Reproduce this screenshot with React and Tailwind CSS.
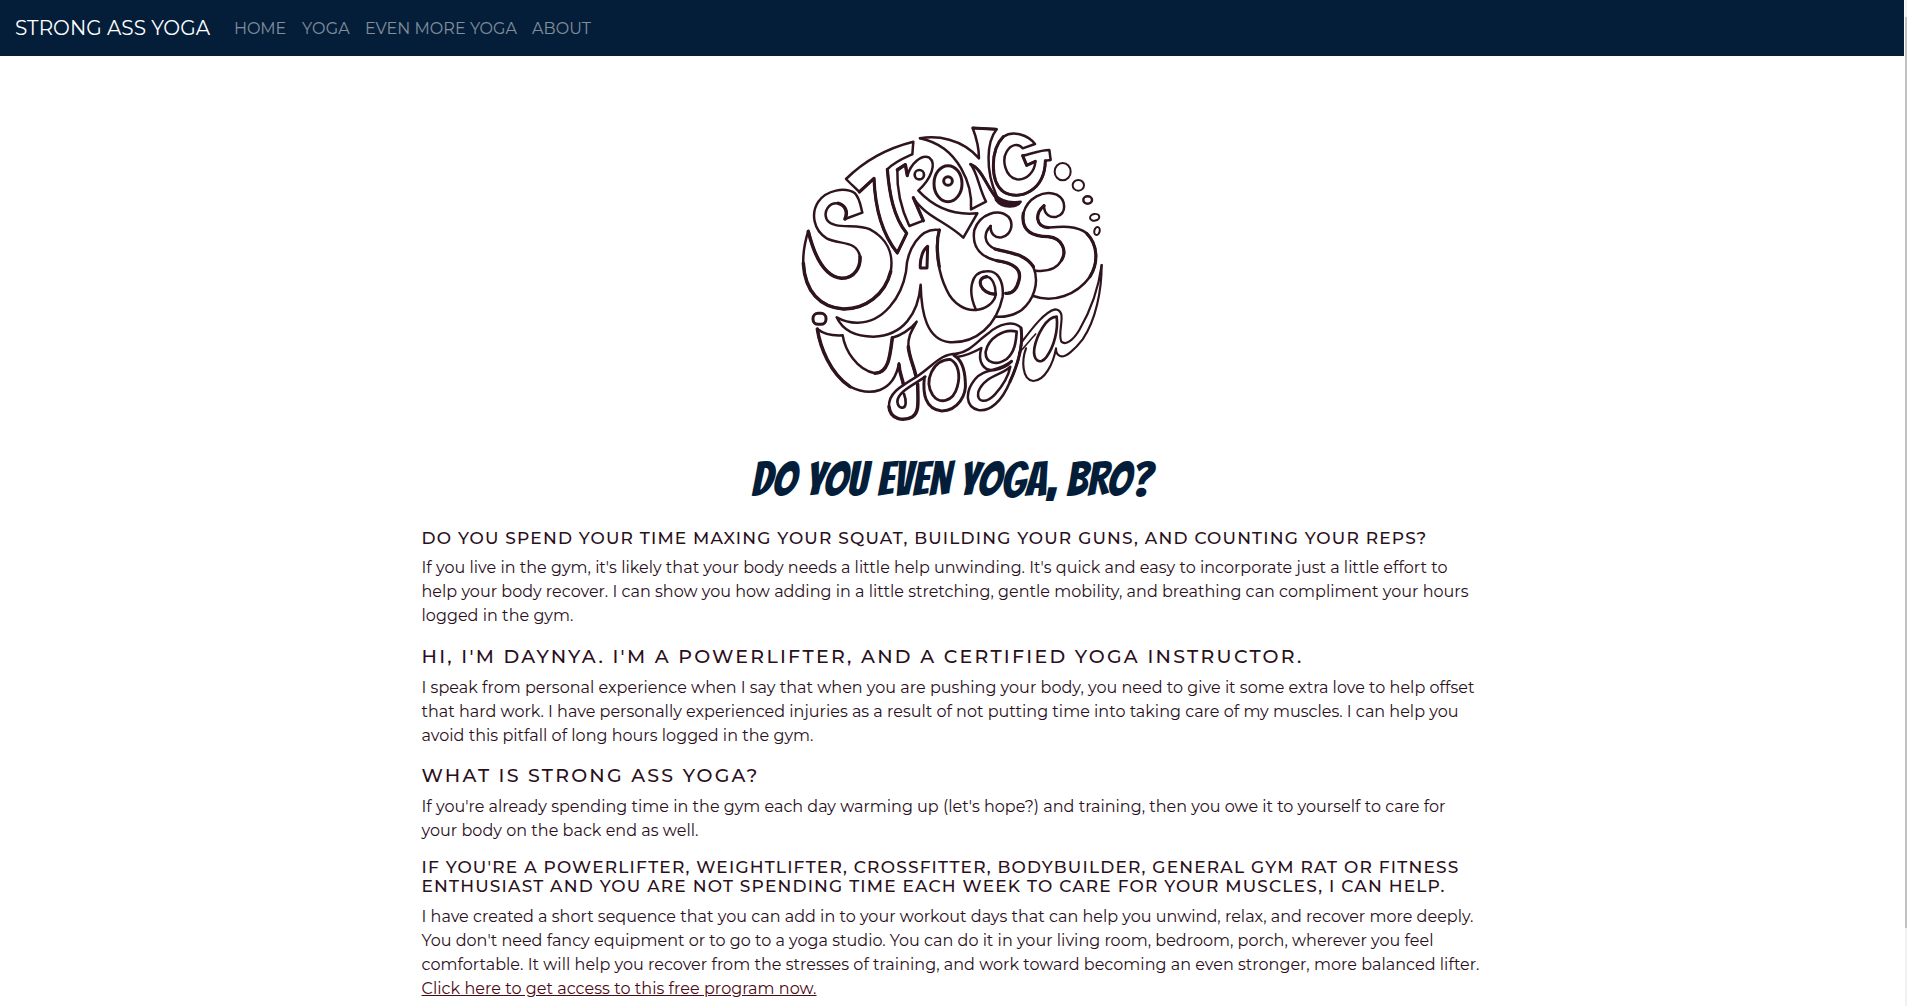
import React, { useLayoutEffect, useRef, useState } from "react";

/* One line of type, tracked so that it is exactly `width` pixels wide. */
function Line({ width, children }) {
  const ref = useRef(null);
  const [spacing, setSpacing] = useState(0);
  useLayoutEffect(() => {
    const natural = ref.current.getBoundingClientRect().width;
    setSpacing((width - natural) / children.length);
  }, []);
  return (
    <span className="block whitespace-pre">
      <span ref={ref} style={{ letterSpacing: spacing + "px" }}>{children}</span>
    </span>
  );
}

function Logo() {
  return (
    <svg
      width="324"
      height="320"
      viewBox="0 0 972 960"
      className="block"
      fill="none"
      stroke="#2f1420"
      strokeWidth="7.5"
      strokeLinecap="round"
      strokeLinejoin="round"
    >
      {/* STRO */}
      <path d="M217 308L165 327C175 305 165 285 145 280C115 277 100 305 110 328C130 362 200 338 240 358C290 385 312 430 302 485C285 555 225 598 160 597C90 592 45 545 40 460C38 420 48 385 55 362C70 425 100 500 155 505C195 505 212 470 210 440C200 390 150 405 110 385C70 360 62 310 85 275C110 240 165 230 195 250C210 265 212 290 217 308Z" />
      <path d="M55 365C70 425 100 500 155 505C195 505 212 470 210 440M165 327C175 305 165 285 145 280M302 485C285 555 225 598 160 597C90 592 45 545 40 460" strokeWidth="10.5" />
      <path d="M168 207C220 155 290 115 370 95L367 133C340 145 315 155 292 178C298 250 310 320 350 370L322 430C275 370 255 290 252 205L208 246C198 235 180 220 168 207Z" />
      <path d="M292 178C298 250 310 320 350 370L322 428C275 370 255 290 252 205L208 246" strokeWidth="9.5" />
      <path d="M322 178L346 163L352 198C362 160 395 132 418 143C440 160 425 205 385 242C425 285 480 318 562 310L520 383C470 335 405 320 370 263L400 332L358 348C335 300 320 240 322 178Z" />
      <path d="M322 180L346 164L352 196M370 263L400 332" strokeWidth="10" />
      <circle cx="388" cy="194" r="14" strokeWidth="8" />
      <ellipse cx="474" cy="221" rx="42" ry="54" strokeWidth="9" />
      <circle cx="474" cy="213" r="13" strokeWidth="9" />

      {/* NG, trailing bubbles */}
      <g transform="translate(450 0)">
        <path d="M-60 85C-10 76 65 85 117 145C117 110 108 80 98 54L170 58C140 95 135 180 170 258" />
        <path d="M92 163C125 175 140 230 170 265M92 163C115 195 115 230 138 275L93 298C98 230 60 110 -60 85" />
        <path d="M99 54L168 58M92 163C125 175 140 230 170 265" strokeWidth="9" />
        <path d="M165 255C185 275 212 280 242 275C235 290 190 300 168 270Z" fill="#2f1420" />
        <path d="M285 102C265 75 220 60 190 80C150 120 150 215 190 245C240 275 315 240 316 152L332 150L328 120C300 120 270 133 248 137L260 166L286 154C285 185 260 212 230 208C195 200 185 150 200 125C212 103 235 98 248 115Z" />
        <path d="M190 80C150 120 150 215 190 245C240 275 315 240 316 152M248 137L260 166L286 154" strokeWidth="9" />
        <ellipse cx="368" cy="185" rx="24" ry="26" strokeWidth="6" />
        <ellipse cx="415" cy="226" rx="17" ry="16" strokeWidth="6" />
        <ellipse cx="443" cy="270" rx="13" ry="11" />
        <ellipse cx="464" cy="322" rx="14" ry="10" transform="rotate(-12 464 322)" strokeWidth="6" />
        <ellipse cx="471" cy="363" rx="8" ry="12" transform="rotate(15 471 363)" strokeWidth="6" />
      </g>

      {/* ASS */}
      <path d="M448 360C390 350 350 420 348 485C335 560 280 640 200 638C175 638 155 630 140 622C160 665 200 680 250 680C340 678 385 610 392 524C394 610 410 690 480 697C560 700 620 645 638 560C642 510 620 480 590 484C540 485 533 545 558 600" />
      <path d="M448 360C430 420 450 500 470 540C490 585 530 602 555 600C590 598 615 575 617 553C618 525 605 500 590 500C555 503 570 552 617 553" />
      <path d="M590 500C555 503 570 552 617 553M448 360C438 395 441 430 448 470" strokeWidth="9.5" />
      <path d="M413 409L411 474L391 474C389 447 398 420 413 409Z" strokeWidth="9" />
      <g transform="translate(450 0)">
        <path d="M152 348C150 370 165 385 185 382C215 375 222 340 205 320C175 295 120 310 103 360C95 410 120 440 170 452C225 460 245 480 237 510C230 540 215 552 196 550" />
        <path d="M152 348C130 370 130 400 165 417C210 430 255 430 280 470C300 520 280 570 245 600C220 617 190 622 165 620" />
        <path d="M170 452C225 460 245 480 237 510C230 540 215 552 198 550M165 417C210 430 255 430 280 470" strokeWidth="10" />
        <path d="M312 287C312 312 330 325 350 320C380 310 380 270 350 254C310 238 262 265 250 310C242 365 280 380 325 380C370 385 380 425 365 450C350 478 320 485 288 482" />
        <path d="M312 287C285 310 285 350 325 353C360 350 410 345 440 370C475 405 475 460 450 500C410 555 340 580 280 558" />
        <path d="M250 310C242 365 280 380 325 380C370 385 380 425 365 450M312 287C285 310 285 350 325 353M440 370C475 405 475 460 450 500" strokeWidth="9.5" />
      </g>

      {/* yoga */}
      <g transform="translate(0 450)">
        <rect x="69" y="160" width="39" height="33" rx="15" strokeWidth="9" />
        <path d="M82 207C105 225 130 228 158 226C165 270 200 330 255 340C295 340 300 290 307 233C330 228 360 210 380 185C370 205 353 225 355 260C357 290 372 320 377 350" />
        <path d="M82 207C90 260 120 340 180 380C240 410 310 400 327 310C328 340 337 355 340 375" />
        <path d="M82 207C90 260 120 340 180 380M255 340C295 340 300 290 307 233M327 314C328 340 337 355 340 372M355 260C357 290 372 320 377 345" strokeWidth="10.5" />
        <path d="M502 281C450 280 430 318 380 350C330 380 295 400 297 440" />
        <path d="M383 372C384 430 388 455 368 470C340 486 300 478 297 440" strokeWidth="10.5" />
        <path d="M406 350C375 372 322 395 322 425C325 448 345 448 347 430C348 418 345 410 342 402" strokeWidth="8" />
        <path d="M403 352C398 400 405 448 455 453C505 452 530 405 526 365C524 325 512 297 492 286" strokeWidth="9" />
        <path d="M480 298C505 310 512 345 502 380C490 425 450 435 428 405C400 360 430 300 480 298Z" strokeWidth="8.5" />
      </g>
      <g transform="translate(450 450)">
        <path d="M50 281C90 275 110 245 145 220C175 192 220 180 243 203C250 250 235 310 210 365C185 425 150 455 115 450C75 440 75 395 105 358C130 325 180 335 215 303" />
        <path d="M50 291C80 287 105 275 124 264C112 305 130 335 165 330C190 326 205 315 215 305" />
        <path d="M230 215C190 205 145 235 137 275C135 310 170 318 200 297C225 275 228 245 230 215Z" strokeWidth="8" />
        <path d="M211 320C190 345 135 345 115 395C108 430 140 430 165 403C190 375 205 350 211 320Z" />
        <path d="M243 205C250 250 235 310 210 365" strokeWidth="9" />
        <path d="M244 248C280 200 315 155 345 148C385 150 350 215 364 245C378 258 400 240 418 210C450 155 475 90 485 15" strokeWidth="6.5" />
        <path d="M485 15C485 90 468 180 428 238C405 268 375 295 360 288C350 285 348 275 348 265C340 310 315 362 280 363C245 360 245 300 258 265" strokeWidth="6.5" />
        <path d="M236 280C255 260 270 240 287 222" strokeWidth="5" />
        <path d="M350 170C320 170 290 225 283 265C278 300 300 318 320 290C342 260 355 210 350 170Z" strokeWidth="8" />
      </g>
    </svg>
  );
}

const minor = "text-[17px] leading-[19px] font-[550]";
const major = "mb-2 text-[19px] leading-[22px] font-[550]";
const para = "text-[16px] leading-6 font-normal";

export default function App() {
  return (
    <div className="flex h-[1006px] w-full overflow-hidden bg-white font-['Montserrat','Inter',sans-serif] text-[#2a0f1c]">
      <div className="flex min-w-0 flex-1 flex-col">
        <nav className="flex h-14 shrink-0 items-center bg-[#041e3a] pl-[15px] text-[16px] text-white/50">
          <div className="w-[219px] text-[20px] text-white"><Line width={195}>STRONG ASS YOGA</Line></div>
          <div className="w-[68px] pt-px"><Line width={52}>HOME</Line></div>
          <div className="w-[63px] pt-px"><Line width={48}>YOGA</Line></div>
          <div className="w-[167px] pt-px"><Line width={152}>EVEN MORE YOGA</Line></div>
          <div className="pt-px"><Line width={59}>ABOUT</Line></div>
        </nav>

        <main className="mx-auto w-[1061px] pt-[54px]">
          <div className="flex justify-center"><Logo /></div>

          <h1 className="mt-5 flex h-[79px] justify-center font-['Bangers','Roboto',sans-serif] text-[48px] leading-[60px] font-medium text-[#041e3a]">
            <Line width={401}>DO YOU EVEN YOGA, BRO?</Line>
          </h1>

          <h4 className={minor + " mb-2"}>
            <Line width={1006}>DO YOU SPEND YOUR TIME MAXING YOUR SQUAT, BUILDING YOUR GUNS, AND COUNTING YOUR REPS?</Line>
          </h4>
          <p className={para}>
            <Line width={1026}>If you live in the gym, it's likely that your body needs a little help unwinding. It's quick and easy to incorporate just a little effort to</Line>
            <Line width={1047}>help your body recover. I can show you how adding in a little stretching, gentle mobility, and breathing can compliment your hours</Line>
            <Line width={152}>logged in the gym.</Line>
          </p>

          <h3 className={major + " mt-[18px]"}>
            <Line width={882}>HI, I'M DAYNYA. I'M A POWERLIFTER, AND A CERTIFIED YOGA INSTRUCTOR.</Line>
          </h3>
          <p className={para}>
            <Line width={1053}>I speak from personal experience when I say that when you are pushing your body, you need to give it some extra love to help offset</Line>
            <Line width={1037}>that hard work. I have personally experienced injuries as a result of not putting time into taking care of my muscles. I can help you</Line>
            <Line width={392}>avoid this pitfall of long hours logged in the gym.</Line>
          </p>

          <h3 className={major + " mt-[17px]"}>
            <Line width={338}>WHAT IS STRONG ASS YOGA?</Line>
          </h3>
          <p className={para}>
            <Line width={1024}>If you're already spending time in the gym each day warming up (let's hope?) and training, then you owe it to yourself to care for</Line>
            <Line width={277}>your body on the back end as well.</Line>
          </p>

          <h4 className={minor + " mt-[15px] mb-[9px]"}>
            <Line width={1038}>IF YOU'RE A POWERLIFTER, WEIGHTLIFTER, CROSSFITTER, BODYBUILDER, GENERAL GYM RAT OR FITNESS</Line>
            <Line width={1024}>ENTHUSIAST AND YOU ARE NOT SPENDING TIME EACH WEEK TO CARE FOR YOUR MUSCLES, I CAN HELP.</Line>
          </h4>
          <p className={para}>
            <Line width={1052}>I have created a short sequence that you can add in to your workout days that can help you unwind, relax, and recover more deeply.</Line>
            <Line width={1012}>You don't need fancy equipment or to go to a yoga studio. You can do it in your living room, bedroom, porch, wherever you feel</Line>
            <Line width={1058}>comfortable. It will help you recover from the stresses of training, and work toward becoming an even stronger, more balanced lifter.</Line>
            <a className="block text-[#4a0a14] underline" href="#program">
              <Line width={395}>Click here to get access to this free program now.</Line>
            </a>
          </p>
        </main>
      </div>

      <div className="flex w-[3px] shrink-0 flex-col bg-white pl-px">
        <div className="flex-1 bg-[#f1f1f1] pt-[17px]">
          <div className="h-[911px] bg-[#c1c1c1]" />
        </div>
      </div>
    </div>
  );
}
